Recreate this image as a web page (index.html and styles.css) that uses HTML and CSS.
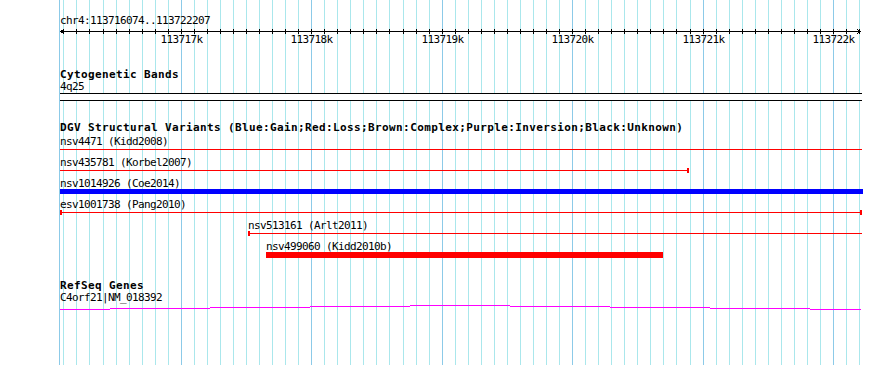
FILE: index.html
```html
<!DOCTYPE html>
<html lang="en">
<head>
    <meta charset="UTF-8">
    <meta name="viewport" content="width=device-width, initial-scale=1.0">
    <title>chr4:113716074..113722207</title>
    <link rel="stylesheet" href="styles.css">
    <script src="script.js" defer></script>
</head>
<body>
    <div class="browser">
        <div class="grid" id="grid"></div>
        <div class="panel">
            <div class="ruler">
                <div class="label">chr4:113716074..113722207</div>
                <svg class="scale" id="scale" width="802" height="7">
                    <path class="axis" d="M0 4.5H801 M3.5 2.5L0.5 4.5L3.5 6.5 M797.5 2.5L800.5 4.5L797.5 6.5"/>
                </svg>
                <div class="scale-labels" id="scale-labels"></div>
            </div>

            <div class="track cyto">
                <div class="track-title">Cytogenetic Bands</div>
                <div class="label">4q25</div>
                <div class="band"></div>
            </div>

            <div class="track dgv">
                <div class="track-title">DGV Structural Variants (Blue:Gain;Red:Loss;Brown:Complex;Purple:Inversion;Black:Unknown)</div>
                <div class="sv-row">
                    <div class="label">nsv4471 (Kidd2008)</div>
                    <div class="sv-line" style="width:802px"></div>
                </div>
                <div class="sv-row">
                    <div class="label">nsv435781 (Korbel2007)</div>
                    <div class="sv-line cap-right" style="width:629px"></div>
                </div>
                <div class="sv-row">
                    <div class="label">nsv1014926 (Coe2014)</div>
                    <div class="sv-bar gain" style="width:803px"></div>
                </div>
                <div class="sv-row">
                    <div class="label">esv1001738 (Pang2010)</div>
                    <div class="sv-line cap-left cap-right" style="width:802px"></div>
                </div>
                <div class="sv-row" style="margin-left:188px">
                    <div class="label">nsv513161 (Arlt2011)</div>
                    <div class="sv-line cap-left" style="width:614px"></div>
                </div>
                <div class="sv-row" style="margin-left:206px">
                    <div class="label">nsv499060 (Kidd2010b)</div>
                    <div class="sv-bar loss" style="width:397px"></div>
                </div>
            </div>

            <div class="track refseq">
                <div class="track-title">RefSeq Genes</div>
                <div class="label gene-label">C4orf21|NM_018392</div>
                <svg class="gene" width="802" height="5">
                    <path d="M0 4.5H50 M50 3.5H150 M150 2.5H250 M250 1.5H350 M350 0.5H450 M450 1.5H550 M550 2.5H650 M650 3.5H750 M750 4.5H801"/>
                </svg>
            </div>
        </div>
    </div>
</body>
</html>
```

FILE: styles.css
```css
*, *::before, *::after {
    box-sizing: border-box;
}
body {
    margin: 0;
    background: #fff;
    color: #000;
    font-family: "DejaVu Sans Mono", "Liberation Mono", monospace;
    font-size: 11px;
    line-height: 12px;
    letter-spacing: -0.62px;
}
.browser {
    position: relative;
    width: 890px;
    height: 365px;
    overflow: hidden;
}

/* grid under everything */
.grid {
    position: absolute;
    top: 0;
    left: 0;
    width: 890px;
    height: 365px;
}
.gridline {
    position: absolute;
    top: 0;
    bottom: 0;
    width: 1px;
    background: #aae7ec;
}
.gridline.major {
    background: #8ccae8;
}

.panel {
    position: relative;
    margin-left: 60px;
    width: 802px;
    padding-top: 15px;
}
.label {
    position: relative;
    z-index: 1;
    height: 12px;
    white-space: nowrap;
}

/* ruler */
.scale {
    display: block;
    shape-rendering: crispEdges;
}
.scale path,
.scale line {
    stroke: #000;
    stroke-width: 1;
    fill: none;
}
.scale-labels {
    position: relative;
    height: 12px;
}
.tick-label {
    position: absolute;
    top: 0;
    white-space: nowrap;
    transform: translateX(-50%);
}

/* tracks */
.track-title {
    height: 12px;
    font-weight: bold;
    letter-spacing: 0.38px;
    white-space: nowrap;
}
.cyto {
    margin-top: 23px;
}
.band {
    height: 8px;
    background: #fff;
    border-top: 1px solid #000;
    border-bottom: 1px solid #000;
}
.dgv {
    margin-top: 21px;
}
.dgv .track-title {
    margin-bottom: 2px;
}
.sv-row {
    height: 21px;
}
.sv-line {
    height: 5px;
    margin-top: -1px;
    background: linear-gradient(#f00, #f00) 0 2px / 100% 1px no-repeat;
}
.sv-line.cap-left {
    border-left: 2px solid #f00;
}
.sv-line.cap-right {
    border-right: 2px solid #f00;
}
.sv-bar {
    height: 5px;
    margin-top: -1px;
}
.sv-bar.gain {
    background: #00f;
}
.sv-bar.loss {
    height: 6px;
    background: #f00;
}
.refseq {
    margin-top: 18px;
}
.gene-label {
    margin-bottom: 1px;
}
.gene {
    display: block;
    shape-rendering: crispEdges;
}
.gene path {
    stroke: #f0f;
    stroke-width: 1;
    fill: none;
}
```

FILE: script.js
```js
var START = 113716074;
var END = 113722207;
var LEFT = 60;
var WIDTH = 800;

function xOf(bp) {
    return Math.round(LEFT + (bp - START) * WIDTH / (END - START));
}

var grid = document.getElementById('grid');
var scale = document.getElementById('scale');
var labels = document.getElementById('scale-labels');

function addLine(x, major) {
    var d = document.createElement('div');
    d.className = major ? 'gridline major' : 'gridline';
    d.style.left = x + 'px';
    grid.appendChild(d);
}

// left edge of the panel
addLine(LEFT - 1, true);

for (var bp = Math.ceil(START / 100) * 100; bp <= END; bp += 100) {
    var x = xOf(bp);
    var major = bp % 1000 === 0;
    addLine(x, major);

    var tick = document.createElementNS('http://www.w3.org/2000/svg', 'line');
    tick.setAttribute('x1', x - LEFT + 0.5);
    tick.setAttribute('x2', x - LEFT + 0.5);
    tick.setAttribute('y1', 2);
    tick.setAttribute('y2', 7);
    scale.appendChild(tick);

    if (major) {
        var l = document.createElement('div');
        l.className = 'tick-label';
        l.textContent = (bp / 1000) + 'k';
        l.style.left = (x - LEFT + 0.5) + 'px';
        labels.appendChild(l);
    }
}
```
